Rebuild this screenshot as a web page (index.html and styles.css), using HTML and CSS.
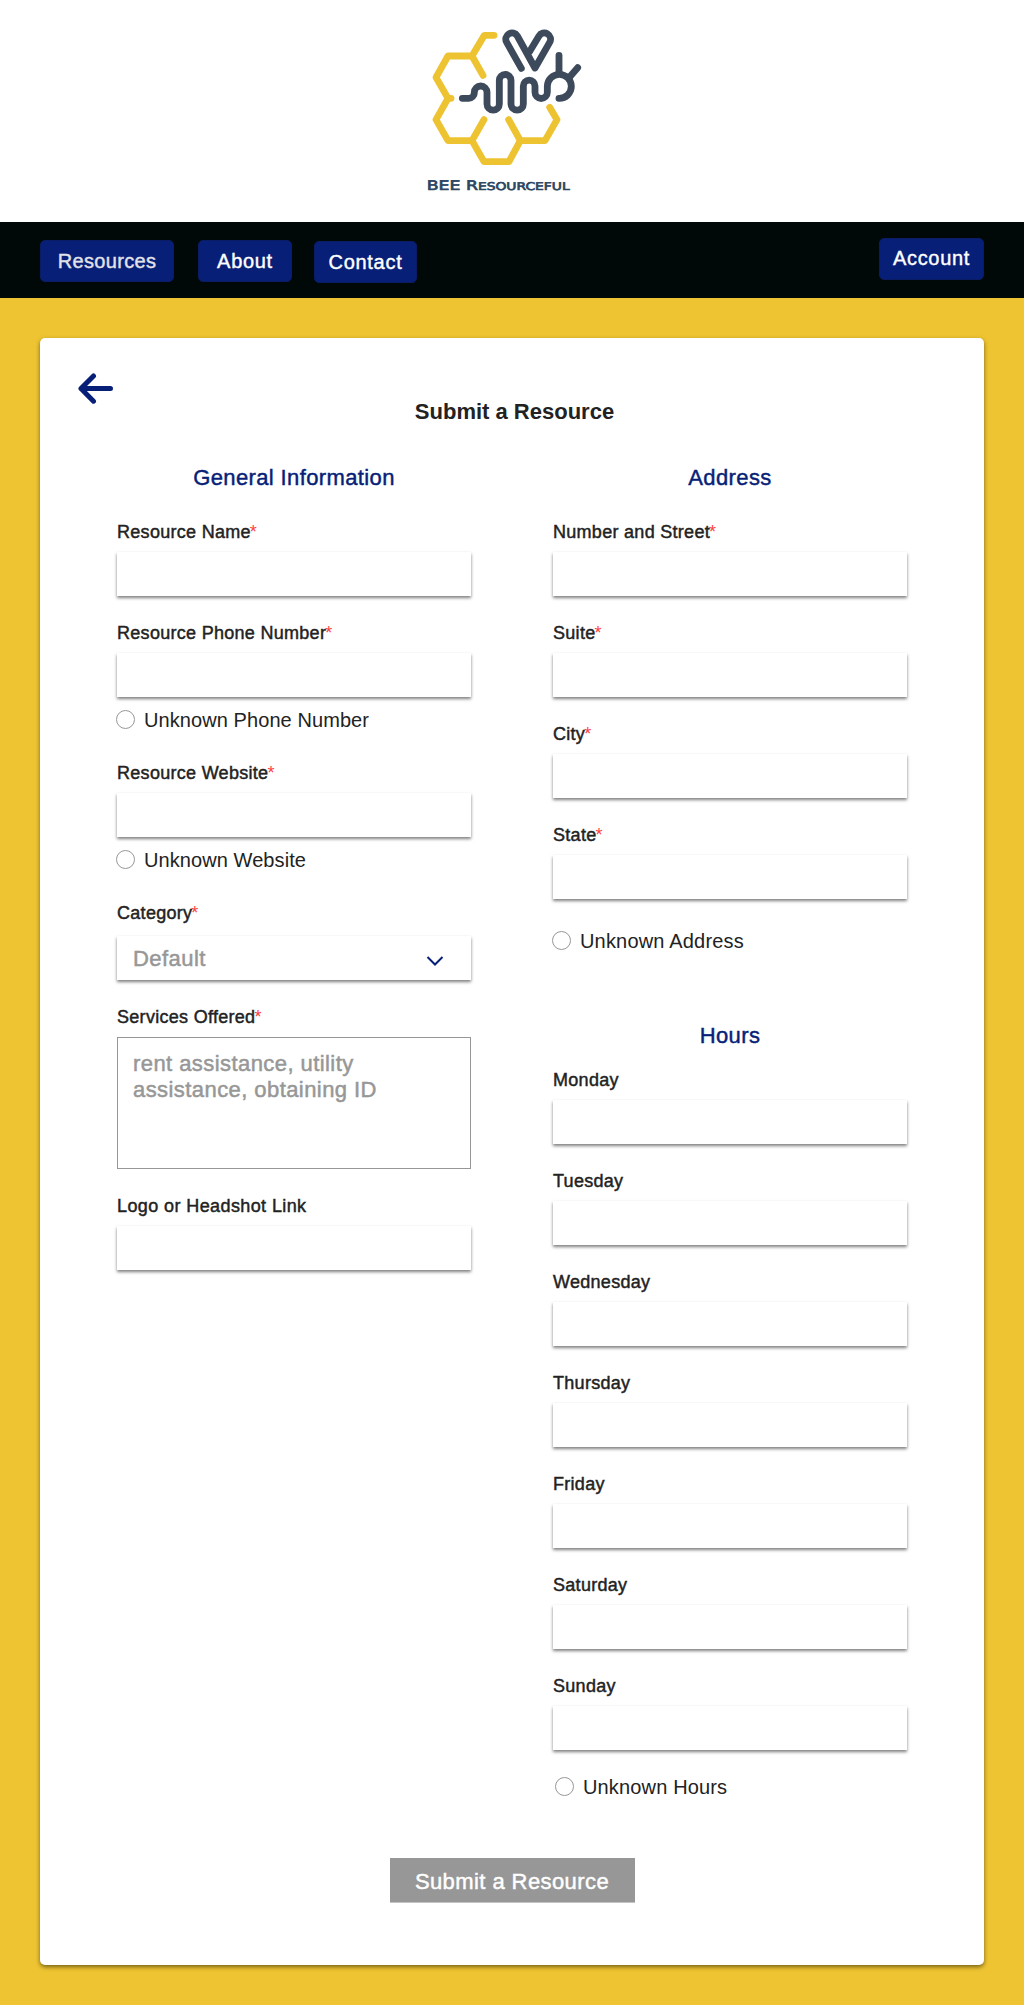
FILE: index.html
```html
<!DOCTYPE html>
<html lang="en">
<head>
<meta charset="utf-8">
<title>Submit a Resource</title>
<link rel="stylesheet" href="styles.css">
</head>
<body>
<header class="masthead">
  <svg class="logo" viewBox="0 0 570 570" role="img" aria-label="BEE Resourceful">
    <g class="comb">
      <path d="M246 61H217L180 123H108L72 187L108 250H117"/>
      <path d="M180 123L213 181"/>
      <path d="M108 250L72 314L108 377H180L216 440H291L325 377H399L435 314L413 277"/>
      <path d="M180 377L216 314"/>
      <path d="M325 377L290 314"/>
    </g>
    <g class="bee">
      <path d="M151 250H170A17 17 0 0 0 187 233V232A19 19 0 0 1 225 232V267A18.5 18.5 0 0 0 262 267V196A17.5 17.5 0 0 1 297 196V267A18.5 18.5 0 0 0 334 267V213A17.5 17.5 0 0 1 369 213V232A18.5 18.5 0 0 0 406 232V214A36 36 0 0 1 478 214A36 36 0 0 1 441 250"/>
      <path d="M328 160L284 82A18.5 18.5 0 0 1 316 63L369 159L413 82A18.5 18.5 0 0 0 381 63L352 111"/>
      <path d="M441 176V121M471 188L497 158"/>
    </g>
    <text class="wordmark" x="44" y="526" textLength="429" lengthAdjust="spacingAndGlyphs">BEE R<tspan class="wordmark-small">ESOURCEFUL</tspan></text>
  </svg>
</header>
<nav class="navbar">
  <a class="nav-btn nav-resources">Resources</a>
  <a class="nav-btn nav-about">About</a>
  <a class="nav-btn nav-contact">Contact</a>
  <a class="nav-btn nav-account">Account</a>
</nav>
<main class="page">
  <form class="card">
    <svg class="back" viewBox="0 0 36 32" role="img" aria-label="Back"><path d="M15.5 3L3 15.6L15.5 28.2M3 15.6H32.5"/></svg>
    <h1 class="title">Submit a Resource</h1>
    <div class="columns">
      <section class="column">
        <h2 class="heading">General Information</h2>
        <div class="field"><label class="label">Resource Name<i>*</i></label><div class="input"></div></div>
        <div class="field"><label class="label">Resource Phone Number<i>*</i></label><div class="input"></div></div>
        <label class="radio"><b></b><span>Unknown Phone Number</span></label>
        <div class="field"><label class="label">Resource Website<i>*</i></label><div class="input"></div></div>
        <label class="radio"><b></b><span>Unknown Website</span></label>
        <div class="field category">
          <label class="label">Category<i>*</i></label>
          <div class="input select"><span>Default</span><svg class="chevron" viewBox="0 0 18 10"><path d="M1.5 1L9 8.5L16.5 1"/></svg></div>
        </div>
        <div class="field">
          <label class="label">Services Offered<i>*</i></label>
          <div class="textarea">rent assistance, utility<br>assistance, obtaining ID</div>
        </div>
        <div class="field"><label class="label label-link">Logo or Headshot Link</label><div class="input"></div></div>
      </section>
      <section class="column">
        <h2 class="heading">Address</h2>
        <div class="field"><label class="label">Number and Street<i>*</i></label><div class="input"></div></div>
        <div class="field"><label class="label">Suite<i>*</i></label><div class="input"></div></div>
        <div class="field"><label class="label">City<i>*</i></label><div class="input"></div></div>
        <div class="field"><label class="label">State<i>*</i></label><div class="input"></div></div>
        <label class="radio radio-address"><b></b><span>Unknown Address</span></label>
        <h2 class="heading heading-hours">Hours</h2>
        <div class="field"><label class="label">Monday</label><div class="input"></div></div>
        <div class="field"><label class="label">Tuesday</label><div class="input"></div></div>
        <div class="field"><label class="label">Wednesday</label><div class="input"></div></div>
        <div class="field"><label class="label">Thursday</label><div class="input"></div></div>
        <div class="field"><label class="label">Friday</label><div class="input"></div></div>
        <div class="field"><label class="label">Saturday</label><div class="input"></div></div>
        <div class="field"><label class="label">Sunday</label><div class="input"></div></div>
        <label class="radio radio-hours"><b></b><span>Unknown Hours</span></label>
      </section>
    </div>
    <button class="submit" type="button">Submit a Resource</button>
  </form>
</main>
</body>
</html>
```
FILE: styles.css
```css
* { box-sizing: border-box; }

body {
  margin: 0;
  background: #fff;
  color: #222;
  font-family: "Liberation Sans", Arial, sans-serif;
}

.masthead { height: 222px; padding: 15px 0 0 412px; }
.logo { display: block; width: 190px; height: 190px; }
.comb, .bee { fill: none; stroke-width: 20.5; stroke-linecap: round; stroke-linejoin: round; }
.comb { stroke: #eec332; }
.bee { stroke: #3d4a5c; }
.wordmark {
  font: 40px "DejaVu Sans", sans-serif;
  fill: #2c4560;
  stroke: #2c4560;
  stroke-width: 2;
  text-rendering: geometricPrecision;
}
.wordmark-small { font-size: 32px; }

.navbar {
  display: flex;
  align-items: flex-start;
  height: 76px;
  padding: 18px 40px 0;
  background: #000907;
}
.nav-btn {
  height: 42px;
  border: 1px solid #0a1c63;
  border-radius: 5px;
  background: #081f78;
  color: #fff;
  font-size: 20px;
  line-height: 40px;
  letter-spacing: .7px;
  text-align: center;
  -webkit-text-stroke: 0.4px;
}
.nav-resources { width: 134px; color: #e2e3e8; letter-spacing: .35px; }
.nav-about { width: 94px; margin-left: 24px; }
.nav-contact { width: 103px; margin: 1px 0 0 22px; }
.nav-account { width: 105px; margin: -2px 0 0 auto; line-height: 38px; }

.page { height: 1707px; padding: 40px; background: #eec432; }
.card {
  display: flex;
  flex-direction: column;
  height: 1627px;
  padding: 35px 77px 0;
  border-radius: 5px;
  background: #fff;
  box-shadow: 0 2px 4px rgba(0, 0, 0, .5);
}
.back {
  width: 36px;
  height: 32px;
  margin-left: -39px;
  fill: none;
  stroke: #081f78;
  stroke-width: 5;
  stroke-linecap: round;
  stroke-linejoin: round;
}
.title {
  margin: -6px 0 0;
  padding-left: 5px;
  font-size: 22px;
  line-height: 26px;
  text-align: center;
}

.columns { display: grid; grid-template-columns: 354px 354px; gap: 82px; margin-top: 40px; }
.column { display: flex; flex-direction: column; }
.heading {
  margin: 0 0 31px;
  color: #081f78;
  font-size: 22px;
  font-weight: 400;
  line-height: 26px;
  letter-spacing: .38px;
  text-align: center;
  -webkit-text-stroke: 0.45px;
}
.heading-hours { margin-bottom: 21px; }

.field { margin-bottom: 27px; }
.label {
  display: block;
  height: 20px;
  margin-bottom: 10px;
  font-size: 18px;
  line-height: 20px;
  letter-spacing: .29px;
  -webkit-text-stroke: 0.45px;
}
.label-link { letter-spacing: .4px; }
.label i { margin-left: -1px; color: #ff3f3f; font-style: normal; -webkit-text-stroke: 0; }
.category .label { margin-bottom: 13px; }
.input { height: 44px; background: #fff; box-shadow: 0 2px 3px rgba(0, 0, 0, .5); }
.select {
  display: flex;
  align-items: center;
  justify-content: space-between;
  padding: 2px 27px 0 16px;
  color: #979797;
  font-size: 22px;
  letter-spacing: .45px;
  -webkit-text-stroke: 0.5px;
}
.chevron { width: 18px; height: 10px; margin-top: 4px; fill: none; stroke: #081f78; stroke-width: 2; }
.textarea {
  height: 132px;
  padding: 13px 15px;
  border: 1px solid #979797;
  color: #979797;
  font-size: 22px;
  line-height: 26px;
  letter-spacing: .43px;
  -webkit-text-stroke: 0.5px;
}

.radio {
  display: flex;
  align-items: flex-start;
  gap: 9px;
  height: 19px;
  margin: -14px 0 34px -1px;
  font-size: 20px;
  line-height: 20px;
  letter-spacing: .08px;
}
.radio b { width: 19px; height: 19px; border: 1px solid #979797; border-radius: 50%; }
.radio-address { margin: 5px 0 73px -1px; letter-spacing: .18px; }
.radio-hours { margin: 0 0 0 2px; letter-spacing: .15px; }

.submit {
  align-self: center;
  width: 245px;
  height: 45px;
  margin-top: 62px;
  padding: 4px 0 0;
  border: 0;
  border-bottom: 1px solid #c4c4c4;
  background: #979797;
  color: #fff;
  font: 22px "Liberation Sans", Arial, sans-serif;
  letter-spacing: .42px;
  -webkit-text-stroke: 0.45px;
}
```
